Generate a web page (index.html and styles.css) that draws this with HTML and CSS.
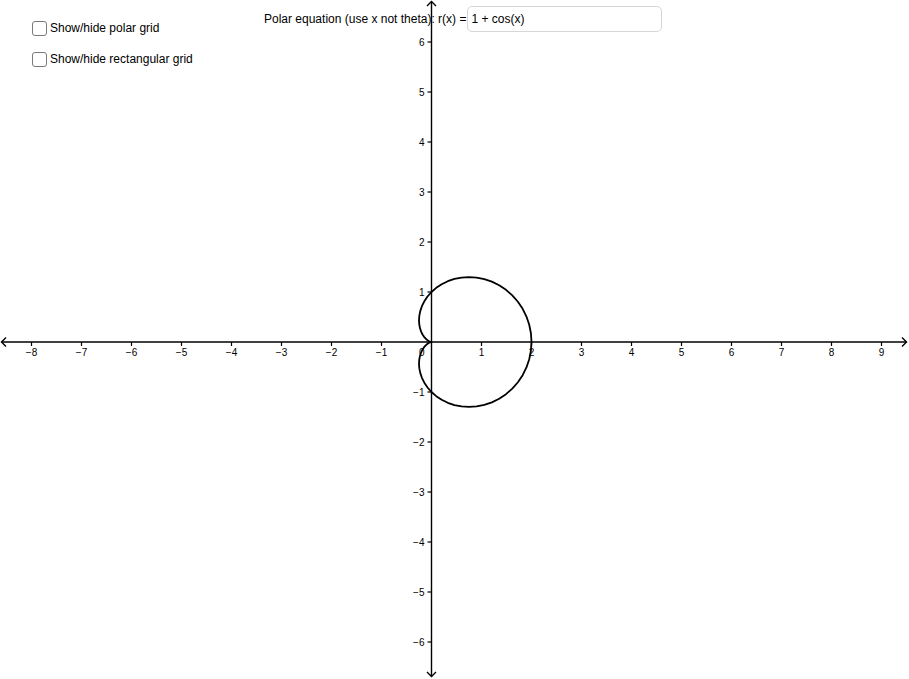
FILE: index.html
```html
<!DOCTYPE html>
<html>
<head>
<meta charset="utf-8">
<link rel="stylesheet" href="styles.css">
</head>
<body>
<div class="stage">
  <svg class="graph" width="909" height="679" viewBox="0 0 909 679">
    <g class="axes">
      <line x1="1.5" y1="342" x2="906.5" y2="342"/>
      <line x1="431.5" y1="1.5" x2="431.5" y2="676.5"/>
      <polyline points="6,337.5 1.5,342 6,346.5"/>
      <polyline points="902,337.5 906.5,342 902,346.5"/>
      <polyline points="427,6 431.5,1.5 436,6"/>
      <polyline points="427,672 431.5,676.5 436,672"/>
    </g>
    <g class="ticks">
      <line x1="31.5" y1="342" x2="31.5" y2="346"/>
      <line x1="81.5" y1="342" x2="81.5" y2="346"/>
      <line x1="131.5" y1="342" x2="131.5" y2="346"/>
      <line x1="181.5" y1="342" x2="181.5" y2="346"/>
      <line x1="231.5" y1="342" x2="231.5" y2="346"/>
      <line x1="281.5" y1="342" x2="281.5" y2="346"/>
      <line x1="331.5" y1="342" x2="331.5" y2="346"/>
      <line x1="381.5" y1="342" x2="381.5" y2="346"/>
      <line x1="481.5" y1="342" x2="481.5" y2="346"/>
      <line x1="531.5" y1="342" x2="531.5" y2="346"/>
      <line x1="581.5" y1="342" x2="581.5" y2="346"/>
      <line x1="631.5" y1="342" x2="631.5" y2="346"/>
      <line x1="681.5" y1="342" x2="681.5" y2="346"/>
      <line x1="731.5" y1="342" x2="731.5" y2="346"/>
      <line x1="781.5" y1="342" x2="781.5" y2="346"/>
      <line x1="831.5" y1="342" x2="831.5" y2="346"/>
      <line x1="881.5" y1="342" x2="881.5" y2="346"/>
      <line x1="427.5" y1="42" x2="431.5" y2="42"/>
      <line x1="427.5" y1="92" x2="431.5" y2="92"/>
      <line x1="427.5" y1="142" x2="431.5" y2="142"/>
      <line x1="427.5" y1="192" x2="431.5" y2="192"/>
      <line x1="427.5" y1="242" x2="431.5" y2="242"/>
      <line x1="427.5" y1="292" x2="431.5" y2="292"/>
      <line x1="427.5" y1="392" x2="431.5" y2="392"/>
      <line x1="427.5" y1="442" x2="431.5" y2="442"/>
      <line x1="427.5" y1="492" x2="431.5" y2="492"/>
      <line x1="427.5" y1="542" x2="431.5" y2="542"/>
      <line x1="427.5" y1="592" x2="431.5" y2="592"/>
      <line x1="427.5" y1="642" x2="431.5" y2="642"/>
    </g>
    <g class="xlabels">
      <text x="31.5" y="356">−8</text>
      <text x="81.5" y="356">−7</text>
      <text x="131.5" y="356">−6</text>
      <text x="181.5" y="356">−5</text>
      <text x="231.5" y="356">−4</text>
      <text x="281.5" y="356">−3</text>
      <text x="331.5" y="356">−2</text>
      <text x="381.5" y="356">−1</text>
      <text x="481.5" y="356">1</text>
      <text x="531.5" y="356">2</text>
      <text x="581.5" y="356">3</text>
      <text x="631.5" y="356">4</text>
      <text x="681.5" y="356">5</text>
      <text x="731.5" y="356">6</text>
      <text x="781.5" y="356">7</text>
      <text x="831.5" y="356">8</text>
      <text x="881.5" y="356">9</text>
    </g>
    <g class="ylabels">
      <text x="424.5" y="45.5">6</text>
      <text x="424.5" y="95.5">5</text>
      <text x="424.5" y="145.5">4</text>
      <text x="424.5" y="195.5">3</text>
      <text x="424.5" y="245.5">2</text>
      <text x="424.5" y="295.5">1</text>
      <text x="424.5" y="395.5">−1</text>
      <text x="424.5" y="445.5">−2</text>
      <text x="424.5" y="495.5">−3</text>
      <text x="424.5" y="545.5">−4</text>
      <text x="424.5" y="595.5">−5</text>
      <text x="424.5" y="645.5">−6</text>
      <text x="424.5" y="356">0</text>
    </g>
    <polyline class="curve" points="531.5,342 530.93,333.30 529.23,324.77 526.45,316.56 522.64,308.83 517.89,301.72 512.30,295.35 506.01,289.83 499.14,285.24 491.86,281.64 484.30,279.08 476.63,277.55 469.0,277.05 461.56,277.53 454.45,278.95 447.79,281.20 441.69,284.21 436.24,287.85 431.5,292 427.52,296.53 424.33,301.31 421.91,306.20 420.25,311.09 419.30,315.84 419.0,320.35 419.27,324.54 420.02,328.32 421.14,331.64 422.54,334.48 424.09,336.81 425.70,338.65 427.25,340.02 428.67,340.97 429.85,341.56 430.75,341.87 431.31,341.98 431.5,342 431.31,342.02 430.75,342.13 429.85,342.44 428.67,343.03 427.25,343.98 425.70,345.35 424.09,347.19 422.54,349.52 421.14,352.36 420.02,355.68 419.27,359.46 419.0,363.65 419.30,368.16 420.25,372.91 421.91,377.80 424.33,382.69 427.52,387.47 431.5,392 436.24,396.15 441.69,399.79 447.79,402.80 454.45,405.05 461.56,406.47 469.0,406.95 476.63,406.45 484.30,404.92 491.86,402.36 499.14,398.76 506.01,394.17 512.30,388.65 517.89,382.28 522.64,375.17 526.45,367.44 529.23,359.23 530.93,350.70 531.5,342"/>
  </svg>

  <div class="checks">
    <label class="check-row"><span class="box"></span><span>Show/hide polar grid</span></label>
    <label class="check-row"><span class="box"></span><span>Show/hide rectangular grid</span></label>
  </div>

  <div class="equation">
    <span class="eq-label">Polar equation (use x not theta): r(x) =</span>
    <div class="eq-input">1 + cos(x)</div>
  </div>
</div>
</body>
</html>
```
FILE: styles.css
```css
html, body {
  margin: 0;
  padding: 0;
  background: #ffffff;
}

.stage {
  position: relative;
  width: 909px;
  height: 679px;
  overflow: hidden;
  font-family: "Liberation Sans", Arial, sans-serif;
  color: #000;
}

.graph {
  position: absolute;
  left: 0;
  top: 0;
}

.axes line,
.axes polyline {
  stroke: #000;
  stroke-width: 1.4;
  fill: none;
}

.ticks line {
  stroke: #000;
  stroke-width: 1.2;
}

.xlabels text,
.ylabels text {
  font-family: "Liberation Sans", Arial, sans-serif;
  font-size: 10px;
  fill: #000;
}

.xlabels text {
  text-anchor: middle;
}

.ylabels text {
  text-anchor: end;
}

.curve {
  fill: none;
  stroke: #000;
  stroke-width: 1.8;
  stroke-linejoin: round;
}

.checks {
  position: absolute;
  left: 32px;
  top: 20px;
  display: flex;
  flex-direction: column;
  gap: 15px;
}

.check-row {
  display: flex;
  align-items: center;
  height: 16px;
  font-size: 12px;
  line-height: 16px;
}

.box {
  box-sizing: border-box;
  width: 15px;
  height: 15px;
  border: 1.5px solid #7a7a7a;
  border-radius: 3px;
  margin-right: 3px;
  background: #fff;
}

.equation {
  position: absolute;
  left: 264px;
  top: 6px;
  display: flex;
  align-items: center;
  font-size: 12px;
}

.eq-label {
  line-height: 26px;
  margin-right: 1px;
}

.eq-input {
  box-sizing: border-box;
  width: 195px;
  height: 26px;
  border: 1px solid #d6d6d6;
  border-radius: 5px;
  padding-left: 3px;
  line-height: 24px;
  background: transparent;
}
```
